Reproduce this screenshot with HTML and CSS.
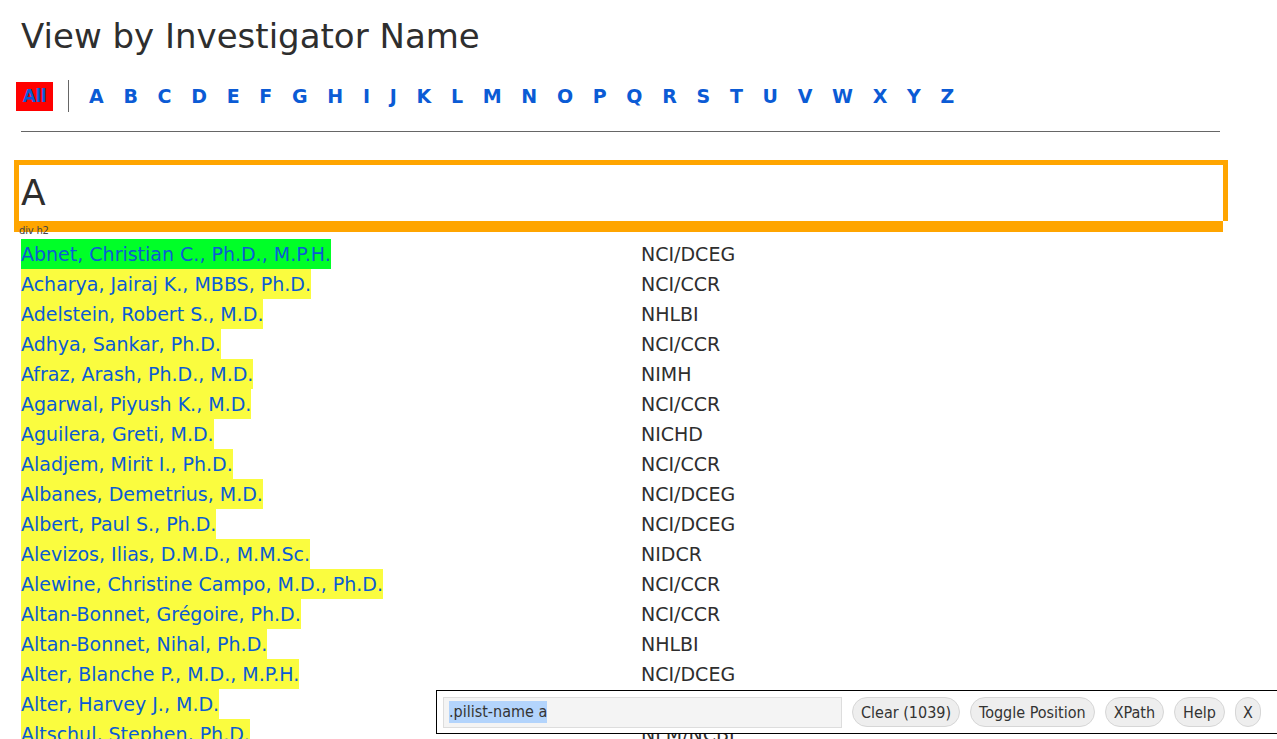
FILE: index.html
```html
<!DOCTYPE html>
<html lang="en">
<head>
<meta charset="utf-8">
<title>View by Investigator Name</title>
<link rel="stylesheet" href="styles.css">
</head>
<body>
<div class="page">
  <h1 class="title">View by Investigator Name</h1>
  <nav class="alpha">
    <a class="alpha-all" href="#">All</a>
    <span class="alpha-sep"></span>
    <div class="alpha-letters">
      <a href="#">A</a><a href="#">B</a><a href="#">C</a><a href="#">D</a><a href="#">E</a><a href="#">F</a><a href="#">G</a><a href="#">H</a><a href="#">I</a><a href="#">J</a><a href="#">K</a><a href="#">L</a><a href="#">M</a><a href="#">N</a><a href="#">O</a><a href="#">P</a><a href="#">Q</a><a href="#">R</a><a href="#">S</a><a href="#">T</a><a href="#">U</a><a href="#">V</a><a href="#">W</a><a href="#">X</a><a href="#">Y</a><a href="#">Z</a>
    </div>
  </nav>
  <hr class="rule">

  <div class="group-head">
    <h2 class="group-letter">A</h2>
  </div>
  <div class="sg-label">div h2</div>

  <div class="pilist">
    <div class="pilist-row"><div class="pilist-name"><a class="sg-selected" href="#">Abnet, Christian C., Ph.D., M.P.H.</a></div><div class="pilist-org">NCI/DCEG</div></div>
    <div class="pilist-row"><div class="pilist-name"><a href="#">Acharya, Jairaj K., MBBS, Ph.D.</a></div><div class="pilist-org">NCI/CCR</div></div>
    <div class="pilist-row"><div class="pilist-name"><a href="#">Adelstein, Robert S., M.D.</a></div><div class="pilist-org">NHLBI</div></div>
    <div class="pilist-row"><div class="pilist-name"><a href="#">Adhya, Sankar, Ph.D.</a></div><div class="pilist-org">NCI/CCR</div></div>
    <div class="pilist-row"><div class="pilist-name"><a href="#">Afraz, Arash, Ph.D., M.D.</a></div><div class="pilist-org">NIMH</div></div>
    <div class="pilist-row"><div class="pilist-name"><a href="#">Agarwal, Piyush K., M.D.</a></div><div class="pilist-org">NCI/CCR</div></div>
    <div class="pilist-row"><div class="pilist-name"><a href="#">Aguilera, Greti, M.D.</a></div><div class="pilist-org">NICHD</div></div>
    <div class="pilist-row"><div class="pilist-name"><a href="#">Aladjem, Mirit I., Ph.D.</a></div><div class="pilist-org">NCI/CCR</div></div>
    <div class="pilist-row"><div class="pilist-name"><a href="#">Albanes, Demetrius, M.D.</a></div><div class="pilist-org">NCI/DCEG</div></div>
    <div class="pilist-row"><div class="pilist-name"><a href="#">Albert, Paul S., Ph.D.</a></div><div class="pilist-org">NCI/DCEG</div></div>
    <div class="pilist-row"><div class="pilist-name"><a href="#">Alevizos, Ilias, D.M.D., M.M.Sc.</a></div><div class="pilist-org">NIDCR</div></div>
    <div class="pilist-row"><div class="pilist-name"><a href="#">Alewine, Christine Campo, M.D., Ph.D.</a></div><div class="pilist-org">NCI/CCR</div></div>
    <div class="pilist-row"><div class="pilist-name"><a href="#">Altan-Bonnet, Grégoire, Ph.D.</a></div><div class="pilist-org">NCI/CCR</div></div>
    <div class="pilist-row"><div class="pilist-name"><a href="#">Altan-Bonnet, Nihal, Ph.D.</a></div><div class="pilist-org">NHLBI</div></div>
    <div class="pilist-row"><div class="pilist-name"><a href="#">Alter, Blanche P., M.D., M.P.H.</a></div><div class="pilist-org">NCI/DCEG</div></div>
    <div class="pilist-row"><div class="pilist-name"><a href="#">Alter, Harvey J., M.D.</a></div><div class="pilist-org">CC/DTM</div></div>
    <div class="pilist-row"><div class="pilist-name"><a href="#">Altschul, Stephen, Ph.D.</a></div><div class="pilist-org">NLM/NCBI</div></div>
  </div>
</div>

<div class="sg-bar">
  <div class="sg-input"><span class="sg-sel">.pilist-name a</span></div>
  <button class="sg-btn">Clear (1039)</button>
  <button class="sg-btn">Toggle Position</button>
  <button class="sg-btn">XPath</button>
  <button class="sg-btn">Help</button>
  <button class="sg-btn sg-btn-x">X</button>
</div>
</body>
</html>
```

FILE: styles.css
```css
html, body {
  margin: 0;
  padding: 0;
  overflow: hidden;
  background: #ffffff;
}

body {
  font-family: "DejaVu Sans", "Liberation Sans", sans-serif;
  color: #333333;
}

.page {
  width: 1199px;
  margin-left: 21px;
}

.title {
  margin: 16px 0 0 0;
  font-size: 34px;
  line-height: 40px;
  font-weight: normal;
  color: #2e2e2e;
}

.alpha {
  display: flex;
  align-items: center;
  height: 32px;
  margin-top: 24px;
  margin-left: -5px;
}

.alpha a {
  color: #0b5bd5;
  text-decoration: none;
  font-weight: bold;
}

.alpha-all {
  display: flex;
  align-items: center;
  justify-content: center;
  width: 37px;
  height: 29px;
  background: #ff0000;
  font-size: 17px;
  letter-spacing: -0.5px;
}

.alpha-sep {
  width: 1px;
  height: 32px;
  background: #666666;
  margin-left: 15px;
}

.alpha-letters {
  display: flex;
  gap: 19.7px;
  margin-left: 20px;
  font-size: 19px;
}

.rule {
  border: 0;
  height: 1px;
  background: #666666;
  margin: 19px 0 0 0;
}

.group-head {
  margin: 28px 0 0 -7px;
  width: 1204px;
  border: 5px solid #ffa500;
  border-bottom: 0;
}

.group-letter {
  margin: 0;
  padding-left: 2px;
  font-size: 36px;
  line-height: 56px;
  font-weight: normal;
  color: #2e2e2e;
}

.sg-label {
  margin-left: -7px;
  width: 1204px;
  padding: 5px 0 0 5px;
  height: 6px;
  box-sizing: content-box;
  background: #ffa500;
  font-size: 10px;
  line-height: 9px;
  color: #444444;
  overflow: visible;
  letter-spacing: -0.2px;
}

.pilist {
  margin-top: 7px;
}

.pilist-row {
  display: flex;
  height: 30px;
  font-size: 19px;
  line-height: 30px;
}

.pilist-name {
  width: 620px;
}

.pilist-name a {
  display: inline-block;
  background: #fafc3f;
  color: #0b5bd5;
  text-decoration: none;
}

.pilist-name a.sg-selected {
  background: #00ff28;
}

.pilist-org {
  color: #2e2e2e;
}

/* selector gadget toolbar */
.sg-bar {
  position: fixed;
  left: 436px;
  top: 690px;
  right: -4px;
  height: 42px;
  border: 1px solid #000000;
  background: #ffffff;
  display: flex;
  align-items: center;
  padding-left: 6px;
  font-family: "DejaVu Sans Condensed", "DejaVu Sans", sans-serif;
  font-stretch: condensed;
  font-size: 16px;
}

.sg-input {
  height: 29px;
  background: #f4f4f4;
  border: 1px solid #dddddd;
  display: flex;
  align-items: center;
  padding-left: 5px;
  box-sizing: content-box;
  width: 392px;
  color: #333333;
}

.sg-sel {
  background: #b3d4fc;
  line-height: 22px;
}

.sg-btn {
  margin-left: 10px;
  height: 30px;
  padding: 0 8px;
  border: 1px solid #d6d6d6;
  border-radius: 15px;
  background: #eeeeee;
  color: #333333;
  font: inherit;
  font-stretch: condensed;
}

.sg-btn-x {
  padding: 0 7px;
}
```
